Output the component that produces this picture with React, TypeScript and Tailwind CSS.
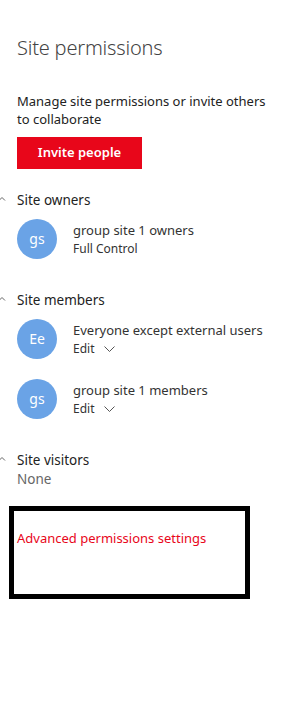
import { ReactNode } from 'react';

const FONT = "font-['Noto_Sans','Open_Sans',sans-serif]";

function Caret() {
  return (
    <svg className="absolute left-[-19px] top-[6px]" width="8" height="6" viewBox="0 0 8 6" fill="none">
      <path d="M1 4.5 L4 1.5 L7 4.5" stroke="#666" strokeWidth="1" />
    </svg>
  );
}

function Section({ title, children }: { title: string; children?: ReactNode }) {
  return (
    <div>
      <div className="relative h-5 text-[13.5px] leading-5 text-[#222]">
        <Caret />
        {title}
      </div>
      {children}
    </div>
  );
}

function Avatar({ initials }: { initials: string }) {
  return (
    <div className="w-10 h-10 rounded-full bg-[#6aa3e6] flex items-center justify-center shrink-0">
      <span className="text-white text-[14px] leading-none">{initials}</span>
    </div>
  );
}

function Member({ initials, name, role, editable }: { initials: string; name: string; role: string; editable?: boolean }) {
  return (
    <div className="flex gap-4 items-start h-10">
      <Avatar initials={initials} />
      <div className="pt-[2px]">
        <div className="text-[13px] leading-[18px] text-[#333]">{name}</div>
        <div className="flex items-center gap-[10px] text-[12px] leading-[20px] text-[#333]">
          {role}
          {editable && (
            <svg width="11" height="6" viewBox="0 0 11 6" fill="none">
              <path d="M0.5 0.5 L5.5 5.5 L10.5 0.5" stroke="#555" strokeWidth="1" />
            </svg>
          )}
        </div>
      </div>
    </div>
  );
}

export default function App() {
  return (
    <div className={`${FONT} w-[302px] h-[714px] bg-white pl-[17px] pt-[34px] overflow-hidden`}>
      <h1 className="text-[20px] leading-[28px] font-light tracking-[-0.2px] text-[#444]">Site permissions</h1>

      <p className="mt-[30px] text-[13px] leading-[18px] text-[#222] w-[260px]">
        Manage site permissions or invite others to collaborate
      </p>

      <button className="mt-[9px] w-[125px] h-8 bg-[#e8061a] text-white text-[13px] font-semibold">
        Invite people
      </button>

      <div className="mt-[21px]">
        <Section title="Site owners">
          <div className="mt-[9px]">
            <Member initials="gs" name="group site 1 owners" role="Full Control" />
          </div>
        </Section>
      </div>

      <div className="mt-[31px]">
        <Section title="Site members">
          <div className="mt-[9px] flex flex-col gap-5">
            <Member initials="Ee" name="Everyone except external users" role="Edit" editable />
            <Member initials="gs" name="group site 1 members" role="Edit" editable />
          </div>
        </Section>
      </div>

      <div className="mt-[31px]">
        <Section title="Site visitors">
          <div className="text-[13.5px] leading-[18px] text-[#666]">None</div>
        </Section>
      </div>

      <div className="mt-[18px] ml-[-8px] w-[241px] h-[93px] border-[5px] border-black pl-[3px] pt-[14px]">
        <a className="text-[13px] leading-[18px] text-[#e8061a]">Advanced permissions settings</a>
      </div>
    </div>
  );
}
